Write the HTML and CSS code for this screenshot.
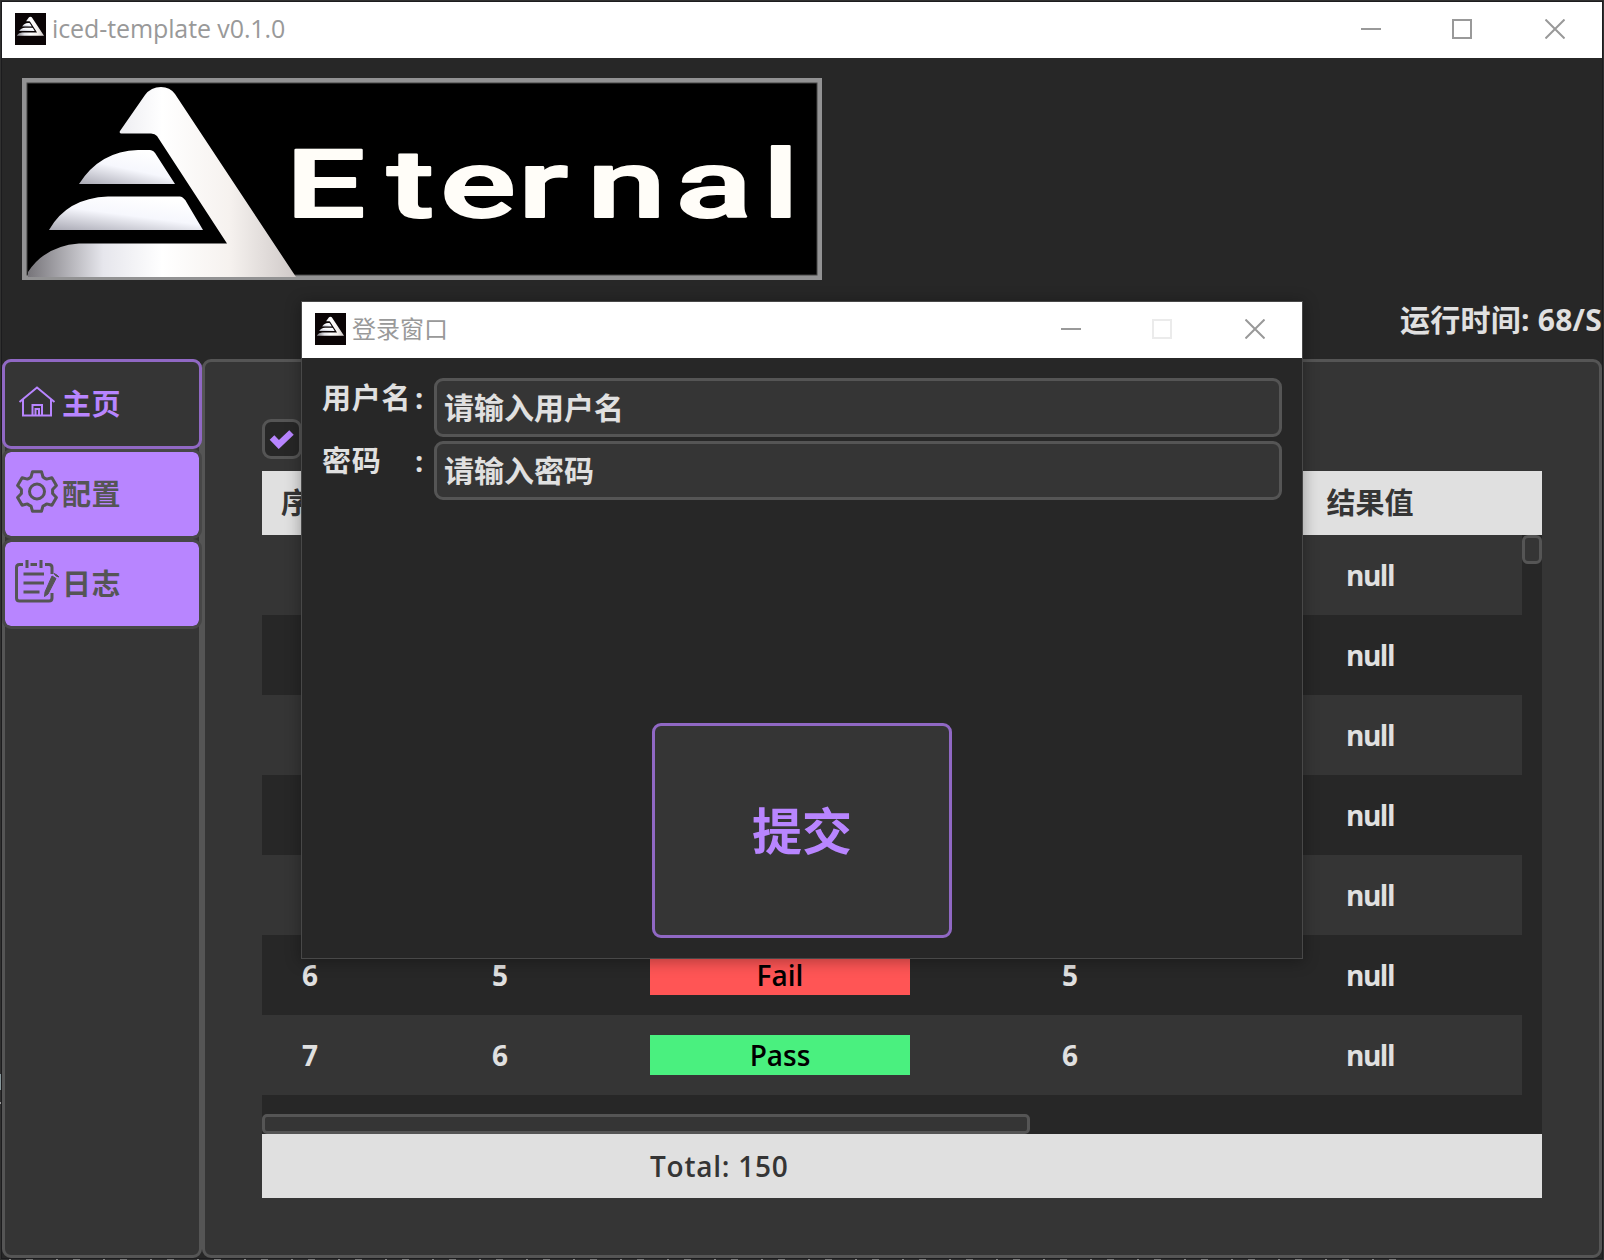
FILE: index.html
```html
<!DOCTYPE html>
<html lang="zh-CN">
<head>
<meta charset="utf-8">
<title>iced-template v0.1.0</title>
<link rel="stylesheet" href="styles.css">
</head>
<body>
<svg class="defs" width="0" height="0">
  <defs>
    <linearGradient id="silver" x1="0" y1="0" x2="1" y2="0">
      <stop offset="0" stop-color="#77757a"/><stop offset=".28" stop-color="#e6e6ec"/><stop offset=".5" stop-color="#fff"/><stop offset=".75" stop-color="#f6f2ef"/><stop offset="1" stop-color="#cfc9c8"/>
    </linearGradient>
    <linearGradient id="layer" x1="0" y1="1" x2=".6" y2="0">
      <stop offset="0" stop-color="#a9a9b4"/><stop offset=".55" stop-color="#f6f7fd"/><stop offset="1" stop-color="#fff"/>
    </linearGradient>
    <symbol id="mark" viewBox="28 83 268 194">
      <path fill="url(#silver)" d="M120 131 L145 95 Q151 87 161 87 Q170 87 175 94 L296 277 H28 V272 Q45 246 79 243.500 H227 L157 136 Q155 133.500 151 133.500 H121 Q119 133 120 131Z"/>
      <path fill="url(#layer)" d="M79 184 Q100 151 138 150 H150 Q154 150 157 156 L175 184Z"/>
      <path fill="url(#layer)" d="M49 230 Q67 198 108 196.500 H180 Q184 197 187 203 L203 230Z"/>
    </symbol>
    <symbol id="app-icon" viewBox="0 0 31 32">
      <rect width="31" height="32" fill="#0a0405"/>
      <use href="#mark" x="2" y="3" width="27" height="20"/>
    </symbol>
  </defs>
</svg>

<div class="window">
  <header class="titlebar">
    <svg class="app-icon"><use href="#app-icon"/></svg>
    <span class="title latin">iced-template v0.1.0</span>
    <span class="controls">
      <svg viewBox="0 0 20 20"><path d="M0 10H20"/></svg>
      <svg viewBox="0 0 20 20"><path d="M1 1H19V19H1Z"/></svg>
      <svg viewBox="0 0 20 20"><path d="M.5 .5L19.500 19.500M19.500 .5L.5 19.500"/></svg>
    </span>
  </header>

  <div class="banner">
    <svg class="logo" viewBox="22 78 800 202">
      <rect x="22" y="78" width="800" height="202" fill="#929293"/>
      <rect x="27" y="83" width="790" height="192" fill="#000" stroke="#444"/>
      <use href="#mark" x="28" y="83" width="268" height="194"/>
      <text class="wordmark" transform="scale(1.5 1)" x="190.500 258 293.500 345.500 391.500 450.500 508.500" y="217">Eternal</text>
    </svg>
  </div>
  <div class="runtime">运行时间: 68/S</div>

  <div class="body">
    <nav class="sidebar">
      <button class="nav active">
        <svg viewBox="0 0 48 48"><path class="thin" d="M5.500 22 23 7.500 40.500 22M9 19.500V35.500H37V19.500M18.500 35V25H28V35M21.500 35V29H25V35"/></svg>主页
      </button>
      <button class="nav">
        <svg viewBox="0 0 48 48"><g transform="translate(23 21.500)"><path d="M-6-14.500-4.500-19.800H4.500L6-14.500Q8-13 9.600-12.400L14.900-13.800 19.400-6 15.600-2.050V2.050L19.400 6 14.900 13.800 9.600 12.400Q8 13.500 6 14.500L4.500 19.800H-4.500L-6 14.500Q-8 13.500-9.600 12.400L-14.900 13.800-19.400 6-15.600 2.050V-2.050L-19.400-6-14.900-13.800-9.600-12.400Q-8-13-6-14.500Z"/><circle r="7.500"/></g></svg>配置
      </button>
      <button class="nav">
        <svg viewBox="0 0 48 48"><path d="M9 4.500H5.500Q2.500 4.500 2.500 7.500V38Q2.500 41 5.500 41H35Q38 41 38 38V33M16.500 4.500H23M31 4.500H35Q38 4.500 38 7.500V14M13 0V8M27 0V8M9.500 14H30M9.500 23H30M9.500 32H25.500"/><path class="solid" d="M38 16 42 18.500 34 34 30.500 36.500 31 32ZM40 13.500 42 16 45 17 43 15Z"/></svg>日志
      </button>
    </nav>

    <main class="panel">
      <span class="checkbox"><svg viewBox="0 0 26 20"><path d="M3 8.500 9.800 15.500 22.500 3.500"/></svg></span>
      <section class="table">
        <div class="row head"><span>序号</span><span></span><span></span><span></span><span>结果值</span></div>
        <div class="viewport">
          <div class="rows">
            <div class="row"><span></span><span></span><span></span><span></span><span class="value">null</span></div>
            <div class="row"><span></span><span></span><span></span><span></span><span class="value">null</span></div>
            <div class="row"><span></span><span></span><span></span><span></span><span class="value">null</span></div>
            <div class="row"><span></span><span></span><span></span><span></span><span class="value">null</span></div>
            <div class="row"><span></span><span></span><span></span><span></span><span class="value">null</span></div>
            <div class="row"><span>6</span><span>5</span><span class="chip fail">Fail</span><span>5</span><span class="value">null</span></div>
            <div class="row"><span>7</span><span>6</span><span class="chip pass">Pass</span><span>6</span><span class="value">null</span></div>
          </div>
          <div class="vthumb"></div>
        </div>
        <div class="hscroll"><div class="hthumb"></div></div>
        <div class="foot">Total: 150</div>
      </section>
    </main>
  </div>
</div>

<div class="dialog">
  <header class="titlebar">
    <svg class="app-icon"><use href="#app-icon"/></svg>
    <span class="title">登录窗口</span>
    <span class="controls">
      <svg viewBox="0 0 20 20"><path d="M0 10H20"/></svg>
      <svg class="disabled" viewBox="0 0 20 20"><path d="M1 1H19V19H1Z"/></svg>
      <svg viewBox="0 0 20 20"><path d="M.5 .5L19.500 19.500M19.500 .5L.5 19.500"/></svg>
    </span>
  </header>
  <form class="form">
    <label class="field"><span class="label"><span>用户名</span><span>:</span></span><span class="input">请输入用户名</span></label>
    <label class="field"><span class="label"><span>密码</span><span>:</span></span><span class="input">请输入密码</span></label>
    <button type="button" class="submit">提交</button>
  </form>
</div>
</body>
</html>
```
FILE: styles.css
```css
* { box-sizing: border-box; }

body {
  margin: 0;
  width: 1604px;
  height: 1260px;
  padding: 2px;
  overflow: hidden;
  position: relative;
  background:
    linear-gradient(#87979b, #87979b) 0 1074px / 2px 16px no-repeat,
    linear-gradient(#999, #999) 0 1102px / 2px 2px no-repeat,
    repeating-linear-gradient(90deg, transparent 0 9px, #8a8a8a 9px 11px, transparent 11px 26px, #777 26px 33px, transparent 33px 47px) 0 1259px / 1400px 1px no-repeat,
    #303030;
  color: #e0e0e0;
  font: 600 28px/1 "Open Sans", "Noto Sans CJK SC", sans-serif;
}

button { font: inherit; margin: 0; }
.defs { position: absolute; }

.window {
  display: flex;
  flex-direction: column;
  width: 1600px;
  height: 1256px;
  background: #272727;
  box-shadow: 0 0 0 1px #1c1c1e;
}

/* Title bars */
.titlebar {
  display: flex;
  align-items: center;
  flex: none;
  height: 56px;
  padding-left: 13px;
  background: #fff;
  color: #999;
}
.app-icon { width: 31px; height: 32px; margin-top: -2px; }
.title {
  margin-left: 6px;
  margin-top: -2px;
  font: 400 24px/32px "Open Sans", "Noto Sans CJK SC", sans-serif;
}
.title.latin { margin-top: -4px; font-size: 25px; letter-spacing: -.1px; }
.controls { display: flex; margin-left: auto; padding-right: 37px; }
.controls svg { width: 20px; height: 20px; margin: -2px 0 0 71px; fill: none; stroke: #999; stroke-width: 2; }
.controls svg:last-child { margin-left: 73px; }
.controls .disabled { stroke: #ebebeb; }

/* Banner */
.banner { flex: none; padding: 20px 20px 0; height: 222px; }
.logo { display: block; width: 800px; height: 202px; }
.wordmark {
  font: 500 94px Roboto, sans-serif;
  fill: #fffdf8;
  stroke: #fffdf8;
  stroke-width: 2;
  stroke-linejoin: round;
}
.runtime {
  flex: none;
  height: 79px;
  padding: 25px 0 0;
  text-align: right;
  line-height: 30px;
  font-size: 30px;
  font-weight: 700;
  letter-spacing: .25px;
  white-space: nowrap;
}

/* Body */
.body { display: flex; flex: 1; min-height: 0; }
.sidebar, .panel {
  border: 3px solid #555;
  border-radius: 9px;
  background: #353535;
}
.sidebar { width: 200px; }
.nav {
  display: flex;
  align-items: center;
  width: 200px;
  height: 90px;
  margin-left: -3px;
  padding: 0 0 2px 9px;
  border: 3px solid #474747;
  border-radius: 9px;
  background: #b885ff;
  background-clip: padding-box;
  color: #555;
  font-size: 29px;
  font-weight: 700;
  letter-spacing: .5px;
}
.nav:first-child { margin-top: -3px; }
.nav.active { border-color: #9068c4; background: #353535; color: #b885ff; }
.nav svg {
  width: 48px;
  height: 48px;
  margin-top: 2px;
  fill: none;
  stroke: currentColor;
  stroke-width: 3;
  stroke-linejoin: round;
}
.nav .thin { stroke-width: 2; stroke-linejoin: miter; }
.nav .solid { fill: currentColor; stroke-width: 1; }

.panel { flex: 1; padding: 57px 57px 0; }
.checkbox {
  display: flex;
  align-items: center;
  justify-content: center;
  width: 40px;
  height: 40px;
  border: 3px solid #555;
  border-radius: 9px;
  background: #272727;
}
.checkbox svg { width: 26px; height: 20px; fill: none; stroke: #b885ff; stroke-width: 6.500; }

/* Table */
.table { margin-top: 12px; width: 1280px; background: #272727; }
.row {
  display: grid;
  grid-template-columns: 96px 284px 276px 304px 296px;
  align-items: center;
  justify-items: center;
  height: 80px;
  font-weight: 700;
}
.value { letter-spacing: -1.500px; }
.row.head, .foot { height: 64px; background: #e0e0e0; color: #353535; }
.row.head { padding-bottom: 2px; font-size: 29px; }
.rows { width: 1260px; }
.rows .row:nth-child(odd) { background: #353535; }
.viewport { display: flex; height: 579px; }
.vthumb { width: 20px; height: 29px; border: 3px solid #555; border-radius: 6px; background: #353535; }
.hscroll { height: 20px; }
.hthumb { width: 768px; height: 20px; border: 3px solid #555; border-radius: 5px; background: #353535; }
.chip { width: 260px; line-height: 40px; text-align: center; color: #000; font-weight: 600; }
.chip.fail { background: #ff5555; }
.chip.pass { background: #4af07f; }
.foot { padding-left: 388px; line-height: 64px; letter-spacing: .75px; }

/* Login window */
.dialog {
  position: absolute;
  left: 302px;
  top: 302px;
  width: 1000px;
  height: 656px;
  background: #272727;
  box-shadow: 0 0 0 1px #484848, 0 2px 14px 2px rgba(0, 0, 0, .3);
}
.form { display: flex; flex-direction: column; gap: 4px; height: 600px; padding: 20px; }
.field { display: flex; height: 59px; }
.label { display: flex; justify-content: space-between; width: 102px; margin-right: 10px; padding-top: 5px; line-height: 30px; font-size: 29px; letter-spacing: .7px; font-weight: 700; }
.input {
  flex: 1;
  padding-left: 7px;
  border: 3px solid #555;
  border-radius: 9px;
  background: #353535;
  line-height: 53px;
  font-size: 30px;
}
.submit {
  width: 300px;
  height: 215px;
  margin: auto auto 0;
  padding: 0;
  border: 3px solid #9068c4;
  border-radius: 9px;
  background: #353535;
  color: #b885ff;
  font-size: 50px;
  font-weight: 700;
}
```
